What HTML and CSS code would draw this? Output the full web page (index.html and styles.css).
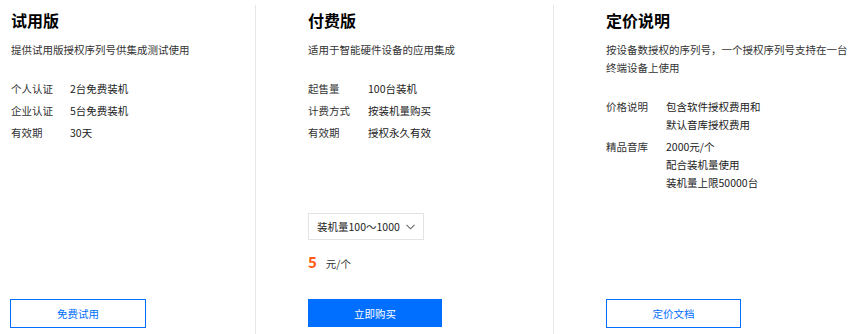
FILE: index.html
```html
<!DOCTYPE html>
<html lang="zh-CN">
<head>
<meta charset="utf-8">
<title>价格</title>
<link rel="stylesheet" href="styles.css">
</head>
<body>
<div class="plans">
  <section class="plan plan-first">
    <h2 class="title">试用版</h2>
    <p class="desc">提供试用版授权序列号供集成测试使用</p>
    <div class="rows">
      <div class="row"><span class="label">个人认证</span><span class="value">2台免费装机</span></div>
      <div class="row"><span class="label">企业认证</span><span class="value">5台免费装机</span></div>
      <div class="row"><span class="label">有效期</span><span class="value">30天</span></div>
    </div>
    <a class="btn btn-outline">免费试用</a>
  </section>
  <section class="plan plan-mid">
    <h2 class="title">付费版</h2>
    <p class="desc">适用于智能硬件设备的应用集成</p>
    <div class="rows">
      <div class="row"><span class="label">起售量</span><span class="value">100台装机</span></div>
      <div class="row"><span class="label">计费方式</span><span class="value">按装机量购买</span></div>
      <div class="row"><span class="label">有效期</span><span class="value">授权永久有效</span></div>
    </div>
    <div class="select">
      <span class="select-text">装机量100～1000</span>
      <svg class="chev" width="9" height="6" viewBox="0 0 9 6"><path d="M0.5 0.8 L4.5 4.8 L8.5 0.8" fill="none" stroke="#666" stroke-width="1.1"/></svg>
    </div>
    <div class="price"><span class="num">5</span><span class="unit">元/个</span></div>
    <a class="btn btn-primary">立即购买</a>
  </section>
  <section class="plan plan-last">
    <h2 class="title">定价说明</h2>
    <p class="desc">按设备数授权的序列号，一个授权序列号支持在一台<br>终端设备上使用</p>
    <div class="rows">
      <div class="row"><span class="label">价格说明</span><span class="value">包含软件授权费用和<br>默认音库授权费用</span></div>
      <div class="row"><span class="label">精品音库</span><span class="value">2000元/个<br>配合装机量使用<br>装机量上限50000台</span></div>
    </div>
    <a class="btn btn-outline">定价文档</a>
  </section>
</div>
</body>
</html>
```
FILE: styles.css
```css
* { box-sizing: border-box; }
html, body { margin: 0; padding: 0; background: #fff; }
body {
  font-family: "Noto Sans CJK SC", "Noto Sans", sans-serif;
  color: #333;
  width: 850px;
  height: 334px;
  overflow: hidden;
}
.plans {
  display: flex;
  height: 334px;
  padding-top: 5px;
}
.plan {
  display: flex;
  flex-direction: column;
  padding: 5px 0 6px 52px;
  height: 329px;
}
.plan-first { width: 256px; padding-left: 11px; border-right: 1px solid #e6e6e6; }
.plan-mid { width: 298px; border-right: 1px solid #e6e6e6; }
.plan-last { width: 296px; }
.title {
  margin: 0;
  font-size: 16px;
  line-height: 21px;
  font-weight: 700;
  color: #000;
}
.desc {
  margin: 10px 0 0;
  font-size: 10.5px;
  line-height: 18px;
  color: #333;
}
.rows { margin-top: 21px; }
.row {
  display: flex;
  font-size: 10.5px;
  line-height: 18px;
  margin-bottom: 4px;
  color: #333;
}
.label { width: 59px; flex: none; }
.plan-mid .label, .plan-last .label { width: 60px; }
.value { color: #222; }
.select {
  margin-top: 67px;
  width: 116px;
  height: 27px;
  border: 1px solid #e3e3e3;
  display: flex;
  align-items: center;
  justify-content: space-between;
  padding: 0 8px 0 8px;
  font-size: 10.5px;
  color: #222;
}
.chev { display: block; margin-top: 1px; }
.price {
  margin-top: 12px;
  display: flex;
  align-items: baseline;
  line-height: 20px;
}
.num {
  font-size: 15px;
  font-weight: 700;
  color: #ff5a14;
}
.unit {
  margin-left: 9px;
  font-size: 10.5px;
  color: #333;
}
.btn {
  margin-top: auto;
  display: flex;
  align-items: center;
  justify-content: center;
  width: 135px;
  height: 29px;
  font-size: 10.5px;
  text-decoration: none;
}
.plan-first .btn { margin-left: -1px; width: 136px; }
.btn-outline {
  border: 1px solid #006eff;
  color: #006eff;
  background: #fff;
}
.btn-primary {
  background: #006eff;
  color: #fff;
  width: 134px;
  height: 28px;
  margin-bottom: 1px;
}
```
